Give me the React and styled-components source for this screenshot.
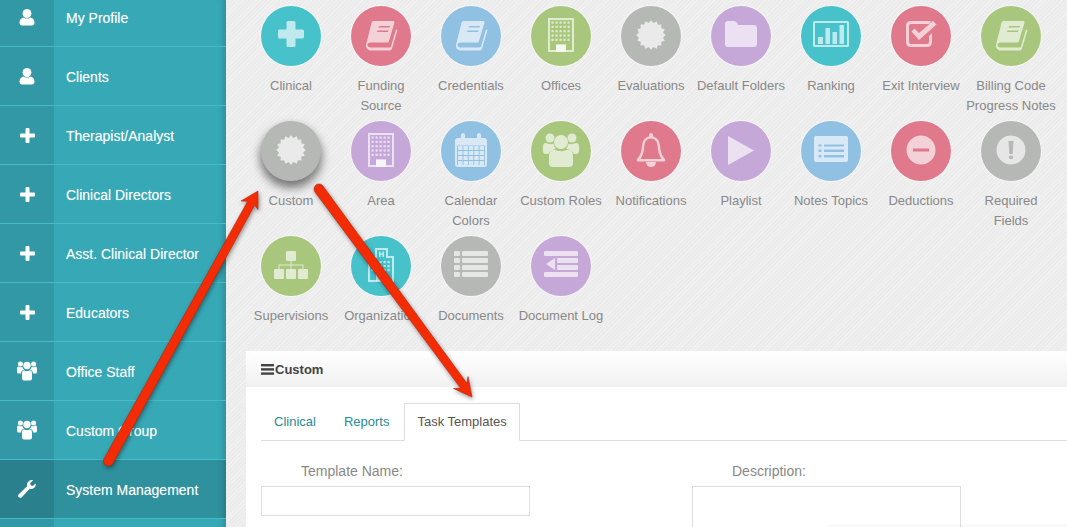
import React from 'react';
import styled, { createGlobalStyle } from 'styled-components';

const GlobalStyle = createGlobalStyle`
	html, body, #root {
		margin: 0;
		height: 100%;
	}
	body {
		overflow: hidden;
		font-family: "Liberation Sans", Arial, sans-serif;
	}
`;

const colors = {
	teal: '#47c2cb',
	pink: '#e0798c',
	blue: '#90c1e2',
	green: '#a8c77d',
	gray: '#b6b8b6',
	purple: '#c5a8d8'
};

const Page = styled.div`
	position: relative;
	display: flex;
	width: 1067px;
	height: 527px;
	overflow: hidden;
`;

const Sidebar = styled.nav`
	flex: 0 0 226px;
	height: 100%;
	overflow: hidden;
	background: #37a8b6;
	box-shadow: inset -7px 0 6px -5px rgba(0, 0, 0, .18);
`;

const SideList = styled.div`
	display: flex;
	flex-direction: column;
	margin-top: -12px;
`;

const SideRow = styled.div`
	display: flex;
	flex: 0 0 59px;
	box-sizing: border-box;
	border-bottom: 1px solid #45bcc8;
	background: ${({ $active }) => $active ? '#2f909e' : 'transparent'};
	box-shadow: ${({ $active }) => $active ? 'inset -7px 0 6px -5px rgba(0, 0, 0, .18)' : 'none'};
	color: #fff;
	font-size: 14px;
	text-shadow: 0 0 1px rgba(255, 255, 255, .35);
`;

const SideIcon = styled.div`
	display: flex;
	align-items: center;
	justify-content: center;
	flex: 0 0 54px;
	background: ${({ $active }) => $active ? '#2b808d' : '#3298a6'};
`;

const SideLabel = styled.div`
	display: flex;
	align-items: center;
	padding: 2px 0 0 12px;
`;

const Main = styled.main`
	flex: 1;
	display: flex;
	flex-direction: column;
	padding: 6px 0 0 20px;
	min-width: 0;
	background-color: #eeeeee;
	background-image: repeating-linear-gradient(135deg, #f1f1f1 0, #f1f1f1 1px, #ececec 1px, #ececec 3px);
`;

const TileGrid = styled.div`
	display: grid;
	grid-template-columns: repeat(9, 90px);
	grid-auto-rows: 115px;
`;

const Tile = styled.div`
	display: flex;
	flex-direction: column;
	align-items: center;
`;

const Circle = styled.div`
	width: 60px;
	height: 60px;
	border-radius: 50%;
	background: ${({ $bg }) => $bg};
	box-shadow: ${({ $lifted }) => $lifted
		? '0 6px 10px 1px rgba(0, 0, 0, .5)'
		: '0 0 0 1px rgba(255, 255, 255, .45)'};
	svg {
		display: block;
	}
`;

const TileLabel = styled.div`
	margin-top: 10px;
	width: 90px;
	color: #888;
	font-size: 13px;
	line-height: 20px;
	text-align: center;
	white-space: pre-line;
`;

const Panel = styled.section`
	flex: 1;
	display: flex;
	flex-direction: column;
	background: #fff;
`;

const PanelHeader = styled.header`
	display: flex;
	align-items: center;
	gap: 1px;
	flex: 0 0 36px;
	box-sizing: border-box;
	padding: 1px 0 0 15px;
	background: linear-gradient(to bottom, #ffffff, #f1f1f1);
	color: #444;
	font-size: 13px;
	font-weight: bold;
`;

const PanelBody = styled.div`
	padding: 16px 0 0 15px;
`;

const Tabs = styled.div`
	display: flex;
	gap: 2px;
	border-bottom: 1px solid #ddd;
`;

const Tab = styled.div`
	box-sizing: border-box;
	height: 38px;
	margin-bottom: -1px;
	padding: 0 12px;
	border: 1px solid ${({ $active }) => $active ? '#ddd' : 'transparent'};
	border-bottom-color: ${({ $active }) => $active ? '#fff' : 'transparent'};
	background: ${({ $active }) => $active ? '#fff' : 'transparent'};
	color: ${({ $active }) => $active ? '#555' : '#2a8a98'};
	font-size: 13px;
	line-height: 36px;
`;

const Form = styled.div`
	display: flex;
	gap: 162px;
	padding-top: 21px;
`;

const Field = styled.div`
	display: flex;
	flex-direction: column;
	width: 269px;
`;

const FieldLabel = styled.label`
	margin-bottom: 6px;
	padding-left: 40px;
	color: #888;
	font-size: 14px;
	line-height: 18px;
`;

const TextBox = styled.div`
	box-sizing: border-box;
	height: ${({ $tall }) => $tall ? '80px' : '30px'};
	border: 1px solid #ddd;
	background: #fff;
`;

const BottomFade = styled.div`
	position: absolute;
	right: 0;
	bottom: 0;
	width: 240px;
	height: 4px;
	background: linear-gradient(to bottom, rgba(0, 0, 0, 0), rgba(0, 0, 0, .04));
`;

const ArrowLayer = styled.svg`
	position: absolute;
	top: 0;
	left: 0;
	pointer-events: none;
	filter: drop-shadow(1px 2px 2px rgba(0, 0, 0, .4));
`;

// sidebar glyphs
const SideUser = () => (
	<svg width="16" height="17" viewBox="0 0 16 17" fill="#fff">
		<ellipse cx="8" cy="4.6" rx="4.4" ry="4.6" />
		<path d="M0.5 13.5C0.5 10.5 2.5 8.8 4.6 8.4C6.5 10 9.5 10 11.4 8.4C13.5 8.8 15.5 10.5 15.5 13.5C15.5 15.6 14.5 16.5 12.8 16.5H3.2C1.500 16.5 0.5 15.600 0.5 13.5Z" />
	</svg>
);

const SidePlus = () => (
	<svg width="15" height="15" viewBox="0 0 15 15" fill="#fff">
		<path d="M5.500 1Q5.500 0 6.500 0H8.500Q9.500 0 9.500 1V5.500H14Q15 5.500 15 6.500V8.500Q15 9.500 14 9.500H9.500V14Q9.500 15 8.500 15H6.500Q5.500 15 5.500 14V9.500H1Q0 9.500 0 8.500V6.500Q0 5.500 1 5.500H5.500Z" />
	</svg>
);

const SideUsers = () => (
	<svg width="20" height="20" viewBox="0 0 20 20" fill="#fff">
		<circle cx="3.400" cy="3" r="2.500" />
		<circle cx="16.600" cy="3" r="2.500" />
		<circle cx="10" cy="4.500" r="3.700" />
		<path d="M0 7.500Q0 5.800 1.500 5.600Q3.400 7 5.300 5.800Q5.600 7.500 7 8.700Q4 9.500 4 12.500H1.500Q0 12.500 0 11Z" />
		<path d="M20 7.500Q20 5.800 18.500 5.600Q16.600 7 14.700 5.800Q14.400 7.500 13 8.700Q16 9.500 16 12.500H18.500Q20 12.500 20 11Z" />
		<path d="M5 12.500Q5 9.800 7 9.200Q10 11 13 9.200Q15 9.800 15 12.500V17.500Q15 19.500 13 19.500H7Q5 19.500 5 17.500Z" />
	</svg>
);

const SideWrench = () => (
	<svg width="18" height="18" viewBox="0 0 18 18" fill="#fff">
		<path d="M17.600 3.400C18.300 6 16.500 9 13.400 9C12.700 9 12.200 8.900 11.700 8.700L4 16.900C2.900 18.100 1.400 18 .6 17.100C-.2 16.200 -.1 14.900 1 13.900L9.100 6.200C8.300 3.300 10.400 .3 13.400 0C14 0 14.600 0 15.100 .2L12.100 3.200L12.700 5.300L14.800 5.900Z" />
	</svg>
);

const SideMenuIcon = { user: SideUser, plus: SidePlus, users: SideUsers, wrench: SideWrench };

const sideItems = [
	['user', 'My Profile'],
	['user', 'Clients'],
	['plus', 'Therapist/Analyst'],
	['plus', 'Clinical Directors'],
	['plus', 'Asst. Clinical Director'],
	['plus', 'Educators'],
	['users', 'Office Staff'],
	['users', 'Custom Group'],
	['wrench', 'System Management', true],
	['plus', '']
];

// tile glyphs, all drawn in the 60x60 box of the circle
const Glyph = ({ children, opacity = 0.65 }) => (
	<svg width="60" height="60" viewBox="0 0 60 60" fill="#fff" fillOpacity={opacity}>
		{children}
	</svg>
);

const starPath = (cx, cy, outer, inner, points) => {
	let d = '';
	for (let i = 0; i < points * 2; i++) {
		const r = i % 2 ? inner : outer;
		const a = (Math.PI * i) / points;
		d += `${i ? 'L' : 'M'}${(cx + r * Math.sin(a)).toFixed(2)} ${(cy - r * Math.cos(a)).toFixed(2)}`;
	}
	return d + 'Z';
};

const PlusGlyph = () => (
	<Glyph>
		<path d="M25.500 16.500Q25.500 15 27 15H33Q34.500 15 34.500 16.500V23.500H41.500Q43 23.500 43 25V31Q43 32.500 41.500 32.500H34.500V39.500Q34.500 41 33 41H27Q25.500 41 25.500 39.500V32.500H18.500Q17 32.500 17 31V25Q17 23.500 18.500 23.500H25.500Z" />
	</Glyph>
);

const BookGlyph = () => (
	<Glyph>
		<path fillRule="evenodd" d="M22.500 15H42Q44 15 43.400 17L37.500 36.500H20C17.500 36.500 16.500 37.800 16.500 39C16.500 40.500 17.800 41.500 19.500 41.500H38.500Q39.700 41.500 40 40.500L45 23.500L46.500 24L41 42.500Q40.500 44.500 38.500 44.500H20C16.500 44.500 15 42 15 39.500C15 38.500 15.300 37.300 15.600 36.500L20.500 17Q21 15 22.500 15ZM28 20H39L38.600 21.600H27.500ZM26.500 24.500H37.500L37 26.100H26Z" />
	</Glyph>
);

const BuildingGlyph = () => {
	const dots = [];
	for (let row = 0; row < 5; row++) {
		for (let col = 0; col < 5; col++) {
			dots.push(<rect key={`${row}-${col}`} x={20.500 + col * 4} y={15.500 + row * 4.300} width="2.200" height="2.200" />);
		}
	}
	return (
		<Glyph>
			<path fillRule="evenodd" d="M17 12H43V46H17ZM19 14V44H25V38.500H35V44H41V14Z" />
			{dots}
			<rect x="25" y="38.500" width="10" height="7.500" />
		</Glyph>
	);
};

const CertGlyph = () => (
	<Glyph opacity={0.7}>
		<path d={starPath(30, 29, 14.800, 12.300, 16)} />
	</Glyph>
);

const FolderGlyph = () => (
	<Glyph opacity={0.66}>
		<path d="M14 18Q14 15 17 15H23Q25.500 15 26.500 17.500L27 19H43Q46 19 46 22V38Q46 41 43 41H17Q14 41 14 38Z" />
	</Glyph>
);

const ChartGlyph = () => (
	<Glyph>
		<path fillRule="evenodd" d="M13.500 15H46.500Q48 15 48 16.500V39.500Q48 41 46.500 41H13.500Q12 41 12 39.500V16.500Q12 15 13.500 15ZM14 17V39H46V17Z" />
		<rect x="17" y="31" width="5" height="7" />
		<rect x="24.500" y="22" width="4.500" height="16" />
		<rect x="31.500" y="26" width="4.500" height="12" />
		<rect x="38.500" y="19" width="4.500" height="19" />
	</Glyph>
);

const CheckGlyph = () => (
	<Glyph>
		<path d="M20 15H38Q39.500 15 40.500 15.500L38 18H20Q18 18 18 20V36Q18 38 20 38H36Q38 38 38 36V30L41 27V36Q41 41 36 41H20Q15 41 15 36V20Q15 15 20 15Z" />
		<path d="M20.500 25.500L23.500 22.500L28 27L42 15L45.500 18.500L28 34Z" />
	</Glyph>
);

const CalendarGlyph = () => {
	const cells = [];
	for (let row = 0; row < 4; row++) {
		for (let col = 0; col < 5; col++) {
			cells.push(<rect key={`${row}-${col}`} x={17 + col * 5.400} y={25 + row * 5} width="4.500" height="4" />);
		}
	}
	return (
		<Glyph>
			<path fillRule="evenodd" d="M14 20Q14 17 17 17H20V14Q20 12 22 12Q24 12 24 14V17H36V14Q36 12 38 12Q40 12 40 14V17H43Q46 17 46 20V43Q46 46 43 46H17Q14 46 14 43ZM16 24.500V44H44V24.500Z" />
			{cells}
		</Glyph>
	);
};

const UsersGlyph = () => (
	<Glyph>
		<circle cx="19" cy="17" r="4.500" />
		<circle cx="41" cy="17" r="4.500" />
		<circle cx="30" cy="21" r="7" />
		<path d="M12 25Q12 22 15 22Q19 24 22.500 22.500Q23 26 25 27.500Q19 29 17 33H15Q12 33 12 30Z" />
		<path d="M48 25Q48 22 45 22Q41 24 37.500 22.500Q37 26 35 27.500Q41 29 43 33H45Q48 33 48 30Z" />
		<path d="M18 34Q18 29.500 23 28.500Q30 32 37 28.500Q42 29.500 42 34V42Q42 46 38 46H22Q18 46 18 42Z" />
	</Glyph>
);

const BellGlyph = () => (
	<Glyph>
		<path fillRule="evenodd" d="M28 14Q28 12 30 12Q32 12 32 14V15.500C36.500 16.500 38.500 20 39 25C39.500 31 41 35 44 38Q45 39.500 43.500 40.500H16.500Q15 39.500 16 38C19 35 20.500 31 21 25C21.500 20 23.500 16.500 28 15.500ZM30 17.500C26 17.500 23.500 20.500 23.300 25.500C23 31 21.500 35 19.500 38H40.500C38.500 35 37 31 36.700 25.500C36.500 20.500 34 17.500 30 17.500Z" />
		<path d="M25 41H35Q34.500 46 30 46Q25.500 46 25 41Z" />
	</Glyph>
);

const PlayGlyph = () => (
	<Glyph>
		<path d="M17 15L43 29.500L17 44Z" />
	</Glyph>
);

const NotesGlyph = () => (
	<Glyph>
		<path fillRule="evenodd" d="M15 15H45Q47 15 47 17V39Q47 41 45 41H15Q13 41 13 39V17Q13 15 15 15ZM23 23.500V25.500H43V23.500ZM23 28.500V31H43V28.500ZM23 34V36.500H43V34ZM17.500 23.500V25.500H20.500V23.500ZM17.500 28.500V31H20.500V28.500ZM17.500 34V36.500H20.500V34Z" />
	</Glyph>
);

const MinusGlyph = () => (
	<Glyph>
		<path fillRule="evenodd" d="M30 14.500A14.500 14.500 0 1 1 30 43.500A14.500 14.500 0 1 1 30 14.500ZM22 27.500V30.500H38V27.500Z" />
	</Glyph>
);

const BangGlyph = () => (
	<Glyph>
		<path fillRule="evenodd" d="M30 14.500A14.500 14.500 0 1 1 30 43.500A14.500 14.500 0 1 1 30 14.500ZM27.500 20L28.300 33H31.700L32.500 20ZM28 34.800V38H32V34.800Z" />
	</Glyph>
);

const SitemapGlyph = () => (
	<Glyph>
		<rect x="25" y="15" width="10" height="10" rx="1" />
		<rect x="13" y="33" width="10" height="10" rx="1" />
		<rect x="25" y="33" width="10" height="10" rx="1" />
		<rect x="37" y="33" width="10" height="10" rx="1" />
		<path d="M29.500 25H30.500V28.500H42.500V33H41.500V29.500H30.500V33H29.500V29.500H18.500V33H17.500V28.500H29.500Z" />
	</Glyph>
);

const HospitalGlyph = () => {
	const dots = [];
	for (let row = 0; row < 3; row++) {
		for (let col = 0; col < 5; col++) {
			dots.push(<rect key={`${row}-${col}`} x={20.500 + col * 4} y={25 + row * 4} width="2.200" height="2.200" />);
		}
	}
	return (
		<Glyph>
			<path fillRule="evenodd" d="M24 12H37V20H43V46H17V20H24ZM26 14V22H19V44H41V22H35V14ZM28 15.500H29.500V17.500H31.500V15.500H33V21H31.500V19H29.500V21H28Z" />
			{dots}
			<rect x="25" y="38" width="10" height="7" />
		</Glyph>
	);
};

const ListGlyph = () => (
	<Glyph>
		{[15, 22, 29, 36].map(y => (
			<g key={y}>
				<rect x="13" y={y} width="6" height="5" rx="1" />
				<rect x="21" y={y} width="26" height="5" rx="1" />
			</g>
		))}
	</Glyph>
);

const OutdentGlyph = () => (
	<Glyph>
		<rect x="13" y="15" width="34" height="5" rx="1" />
		<rect x="26" y="22" width="21" height="5" rx="1" />
		<rect x="26" y="29" width="21" height="5" rx="1" />
		<rect x="13" y="36" width="34" height="5" rx="1" />
		<path d="M24 22V34L15 28Z" />
	</Glyph>
);

const tiles = [
	['Clinical', colors.teal, PlusGlyph],
	['Funding\nSource', colors.pink, BookGlyph],
	['Credentials', colors.blue, BookGlyph],
	['Offices', colors.green, BuildingGlyph],
	['Evaluations', colors.gray, CertGlyph],
	['Default Folders', colors.purple, FolderGlyph],
	['Ranking', colors.teal, ChartGlyph],
	['Exit Interview', colors.pink, CheckGlyph],
	['Billing Code\nProgress Notes', colors.green, BookGlyph],
	['Custom', colors.gray, CertGlyph, true],
	['Area', colors.purple, BuildingGlyph],
	['Calendar\nColors', colors.blue, CalendarGlyph],
	['Custom Roles', colors.green, UsersGlyph],
	['Notifications', colors.pink, BellGlyph],
	['Playlist', colors.purple, PlayGlyph],
	['Notes Topics', colors.blue, NotesGlyph],
	['Deductions', colors.pink, MinusGlyph],
	['Required\nFields', colors.gray, BangGlyph],
	['Supervisions', colors.green, SitemapGlyph],
	['Organization', colors.teal, HospitalGlyph],
	['Documents', colors.gray, ListGlyph],
	['Document Log', colors.purple, OutdentGlyph]
];

const Arrows = () => (
	<ArrowLayer width="1067" height="527" viewBox="0 0 1067 527">
		<g fill="#f42c05" stroke="#b3260b" strokeWidth="0.6" strokeLinejoin="round">
			<path d="M104.100 458.600L247.700 201.300L241 201L258 191L258 209.500L254.700 205.100L112.900 463.400A5 5 0 0 1 104.100 458.600Z" />
			<path d="M315 192A5 5 0 0 1 323 186L466.900 383.300L468 376.500L472 397L453.500 388.500L460.500 388.100Z" />
		</g>
	</ArrowLayer>
);

const MenuBars = () => (
	<svg width="13" height="11" viewBox="0 0 13 11" fill="#444">
		<rect y="0" width="13" height="2.400" />
		<rect y="4.200" width="13" height="2.400" />
		<rect y="8.400" width="13" height="2.400" />
	</svg>
);

export default function App() {
	return (
		<Page>
			<GlobalStyle />
			<Sidebar>
				<SideList>
					{sideItems.map(([icon, label, active]) => {
						const Icon = SideMenuIcon[icon];
						return (
							<SideRow key={label} $active={active}>
								<SideIcon $active={active}>{label && <Icon />}</SideIcon>
								<SideLabel>{label}</SideLabel>
							</SideRow>
						);
					})}
				</SideList>
			</Sidebar>
			<Main>
				<TileGrid>
					{tiles.map(([label, bg, Icon, lifted]) => (
						<Tile key={label}>
							<Circle $bg={bg} $lifted={lifted}><Icon /></Circle>
							<TileLabel>{label}</TileLabel>
						</Tile>
					))}
				</TileGrid>
				<Panel>
					<PanelHeader><MenuBars />Custom</PanelHeader>
					<PanelBody>
						<Tabs>
							<Tab>Clinical</Tab>
							<Tab>Reports</Tab>
							<Tab $active>Task Templates</Tab>
						</Tabs>
						<Form>
							<Field>
								<FieldLabel>Template Name:</FieldLabel>
								<TextBox />
							</Field>
							<Field>
								<FieldLabel>Description:</FieldLabel>
								<TextBox $tall />
							</Field>
						</Form>
					</PanelBody>
				</Panel>
			</Main>
			<BottomFade />
			<Arrows />
		</Page>
	);
}
